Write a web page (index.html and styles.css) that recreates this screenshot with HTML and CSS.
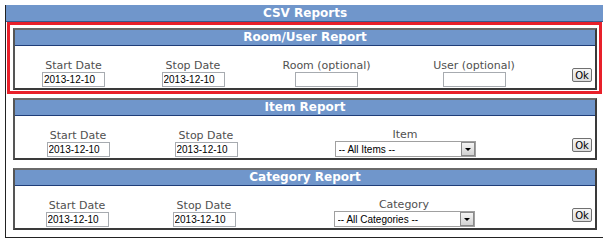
FILE: index.html
```html
<!DOCTYPE html>
<html lang="en">

<head>
    <meta charset="UTF-8">
    <title>CSV Reports</title>
    <link rel="stylesheet" href="styles.css">
</head>

<body>
    <div class="frame">
        <div class="frame-title">CSV Reports</div>

        <div class="reports">
            <div class="highlight">
                <div class="report">
                    <div class="report-title">Room/User Report</div>
                    <div class="report-row room-row">
                        <div class="field">
                            <label>Start Date</label>
                            <input type="text" class="date-input" value="2013-12-10">
                        </div>
                        <div class="field">
                            <label>Stop Date</label>
                            <input type="text" class="date-input" value="2013-12-10">
                        </div>
                        <div class="field">
                            <label>Room (optional)</label>
                            <input type="text" class="date-input">
                        </div>
                        <div class="field">
                            <label>User (optional)</label>
                            <input type="text" class="date-input">
                        </div>
                        <div class="action"><button class="ok-btn">Ok</button></div>
                    </div>
                </div>
            </div>

            <div class="report">
                <div class="report-title">Item Report</div>
                <div class="report-row item-row">
                    <div class="field">
                        <label>Start Date</label>
                        <input type="text" class="date-input" value="2013-12-10">
                    </div>
                    <div class="field">
                        <label>Stop Date</label>
                        <input type="text" class="date-input" value="2013-12-10">
                    </div>
                    <div class="field">
                        <label>Item</label>
                        <div class="select-box">
                            <select>
                                <option>-- All Items --</option>
                            </select>
                            <span class="select-arrow"></span>
                        </div>
                    </div>
                    <div class="action"><button class="ok-btn">Ok</button></div>
                </div>
            </div>

            <div class="report">
                <div class="report-title">Category Report</div>
                <div class="report-row category-row">
                    <div class="field">
                        <label>Start Date</label>
                        <input type="text" class="date-input" value="2013-12-10">
                    </div>
                    <div class="field">
                        <label>Stop Date</label>
                        <input type="text" class="date-input" value="2013-12-10">
                    </div>
                    <div class="field">
                        <label>Category</label>
                        <div class="select-box">
                            <select>
                                <option>-- All Categories --</option>
                            </select>
                            <span class="select-arrow"></span>
                        </div>
                    </div>
                    <div class="action"><button class="ok-btn">Ok</button></div>
                </div>
            </div>
        </div>
    </div>
</body>

</html>
```

FILE: styles.css
```css
body {
    margin: 5px;
    font-family: 'DejaVu Sans', Verdana, sans-serif;
    background-color: #ffffff;
}

.frame {
    width: 598px;
    border: 1px solid #222;
    border-top: none;
}

.frame-title,
.report-title {
    background-color: #7096cb;
    color: #ffffff;
    font-weight: bold;
    font-size: 12px;
    text-align: center;
}

.frame-title {
    height: 16px;
    line-height: 16px;
    border-bottom: 1px solid #3b5a8c;
}

.reports {
    display: flex;
    flex-direction: column;
    gap: 8px;
    padding: 6px 7px 7px 7px;
}

.highlight {
    position: relative;
}

.highlight::before {
    content: '';
    position: absolute;
    top: -6px;
    bottom: -4px;
    left: -6px;
    right: -5px;
    border: 3px solid #e8202a;
    pointer-events: none;
}

.report {
    border: 2px solid #3a3a3a;
    border-top-color: #6a6a6a;
    border-left-color: #555;
    height: 58px;
}

.report-title {
    height: 15px;
    line-height: 15px;
    border-bottom: 1px solid #1f3d78;
}

.report-row {
    display: grid;
    align-items: end;
    height: 42px;
    padding-bottom: 1px;
    box-sizing: border-box;
}

.room-row {
    grid-template-columns: 117px 122px 145px 150px 1fr;
}

.item-row {
    grid-template-columns: 126px 130px 268px 1fr;
}

.category-row {
    grid-template-columns: 124px 130px 270px 1fr;
}

.field {
    display: flex;
    flex-direction: column;
    align-items: center;
}

.field label {
    font-size: 11px;
    line-height: 13px;
    color: #505050;
}

.date-input {
    width: 63px;
    height: 15px;
    box-sizing: border-box;
    border: 1px solid #a7abb0;
    padding: 0 1px;
    font-family: 'Liberation Sans', Arial, sans-serif;
    font-size: 10px;
    color: #000;
    margin: 0;
}

.select-box {
    position: relative;
    width: 141px;
    height: 16px;
}

.select-box select {
    appearance: none;
    -webkit-appearance: none;
    display: block;
    width: 100%;
    height: 16px;
    box-sizing: border-box;
    border: 1px solid #a0a0a0;
    border-radius: 0;
    background-color: #fff;
    padding: 0 0 0 3px;
    margin: 0;
    font-family: 'Liberation Sans', Arial, sans-serif;
    font-size: 10px;
    color: #000;
}

.select-arrow {
    position: absolute;
    top: 1px;
    right: 1px;
    width: 14px;
    height: 14px;
    box-sizing: border-box;
    border: 1px solid #8a8a8a;
    background: linear-gradient(#f4f4f4, #d2d2d2);
}

.select-arrow::after {
    content: '';
    position: absolute;
    left: 3px;
    top: 5px;
    border-left: 3px solid transparent;
    border-right: 3px solid transparent;
    border-top: 3px solid #000;
}

.action {
    display: flex;
    justify-content: flex-end;
    padding-right: 3px;
    padding-bottom: 5px;
}

.ok-btn {
    font-family: 'DejaVu Sans', Verdana, sans-serif;
    font-size: 10px;
    line-height: 11px;
    height: 14px;
    width: 20px;
    padding: 0;
    margin: 0;
    border: 1px solid #707070;
    border-radius: 2px;
    background: linear-gradient(#f6f6f6, #dcdcdc);
    color: #000;
}
```
